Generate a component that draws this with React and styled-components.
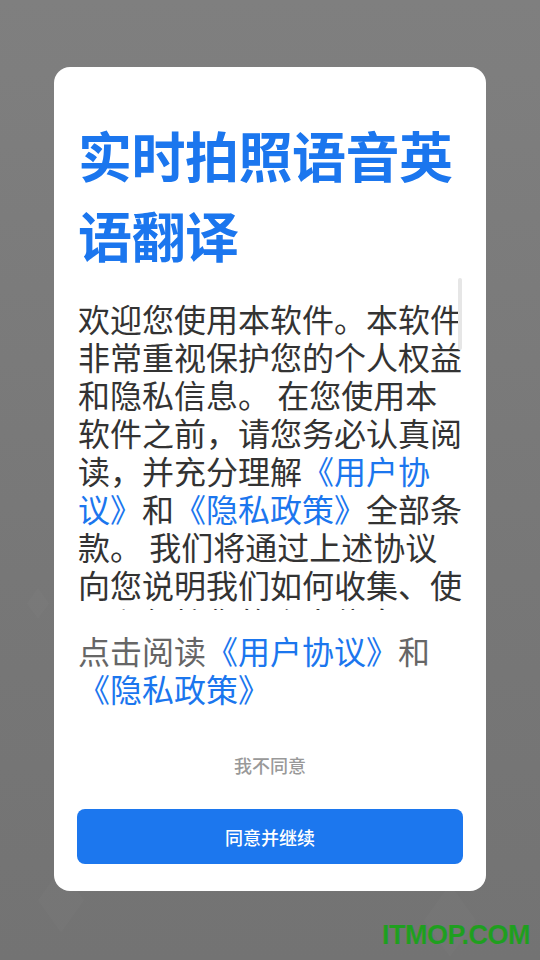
import React from 'react';
import styled, { createGlobalStyle } from 'styled-components';

const GlobalStyle = createGlobalStyle`
  html, body {
    margin: 0;
    padding: 0;
  }
  body {
    font-family: "Noto Sans CJK SC", "Noto Sans", sans-serif;
  }
`;

const Backdrop = styled.div`
  position: relative;
  width: 540px;
  height: 960px;
  overflow: hidden;
  background: linear-gradient(180deg, #7f7f7f 0%, #777777 60%, #737373 100%);
  padding-top: 67px;
  box-sizing: border-box;
`;

const Diamond = styled.div`
  position: absolute;
  width: ${p => p.size}px;
  height: ${p => p.size * 1.4}px;
  left: ${p => p.x}px;
  top: ${p => p.y}px;
  background: rgba(255, 255, 255, 0.02);
  clip-path: polygon(50% 0, 100% 50%, 50% 100%, 0 50%);
`;

const Card = styled.div`
  position: relative;
  z-index: 1;
  width: 432px;
  margin: 0 auto;
  background: #ffffff;
  border-radius: 16px;
  padding: 48px 23px 27px;
  box-sizing: border-box;
  display: flex;
  flex-direction: column;
`;

const Title = styled.h1`
  margin: 0;
  padding-left: 1px;
  color: #1b76ee;
  font-size: 54px;
  font-weight: 700;
  line-height: 80px;
  letter-spacing: -0.5px;
`;

const ScrollWrap = styled.div`
  position: relative;
  margin-top: 3px;
  height: 332px;
`;

const ScrollArea = styled.div`
  height: 100%;
  overflow-y: auto;
  padding: 21px 0 0 1px;
  box-sizing: border-box;
  scrollbar-width: none;
  &::-webkit-scrollbar {
    display: none;
  }
`;

const Thumb = styled.div`
  position: absolute;
  right: 1px;
  top: 0;
  width: 4px;
  height: 72px;
  border-radius: 2px;
  background: #e6e6e6;
`;

const Body = styled.p`
  margin: 0;
  width: 388px;
  font-size: 32px;
  font-weight: 400;
  line-height: 38px;
  color: #333333;
`;

const Link = styled.span`
  color: #1b76ee;
`;

const Notice = styled.p`
  margin: 21px 0 0 1px;
  width: 388px;
  font-size: 32px;
  font-weight: 400;
  line-height: 38px;
  color: #666666;
`;

const Decline = styled.div`
  margin-top: 46px;
  text-align: center;
  font-size: 18px;
  font-weight: 500;
  line-height: 24px;
  color: #999999;
`;

const Agree = styled.button`
  margin-top: 32px;
  height: 55px;
  width: 100%;
  border: none;
  border-radius: 8px;
  background: #1c77ee;
  color: #ffffff;
  font-family: inherit;
  font-size: 18px;
  font-weight: 500;
  cursor: pointer;
`;

const Watermark = styled.div`
  position: absolute;
  right: 10px;
  bottom: 9px;
  z-index: 2;
  font-family: "Liberation Sans", Arial, sans-serif;
  font-weight: 700;
  font-size: 27px;
  letter-spacing: -0.5px;
  color: #1f9f1f;
`;

export default function App() {
  return (
    <>
      <GlobalStyle />
      <Backdrop>
        <Diamond x={27} y={588} size={22} />
        <Diamond x={38} y={868} size={46} />
        <Diamond x={424} y={884} size={52} />
        <Card>
          <Title>实时拍照语音英语翻译</Title>
          <ScrollWrap>
            <ScrollArea>
              <Body>
                欢迎您使用本软件。本软件非常重视保护您的个人权益和隐私信息。 在您使用本软件之前，请您务必认真阅读，并充分理解
                <Link>《用户协议》</Link>和<Link>《隐私政策》</Link>
                全部条款。 我们将通过上述协议向您说明我们如何收集、使用和保护您的个人信息，以及您享有的相关权利。 如您同意，请点击“同意并继续”开始使用我们的服务。
              </Body>
            </ScrollArea>
            <Thumb />
          </ScrollWrap>
          <Notice>
            点击阅读<Link>《用户协议》</Link>和<Link>《隐私政策》</Link>
          </Notice>
          <Decline>我不同意</Decline>
          <Agree>同意并继续</Agree>
        </Card>
        <Watermark>ITMOP.COM</Watermark>
      </Backdrop>
    </>
  );
}
